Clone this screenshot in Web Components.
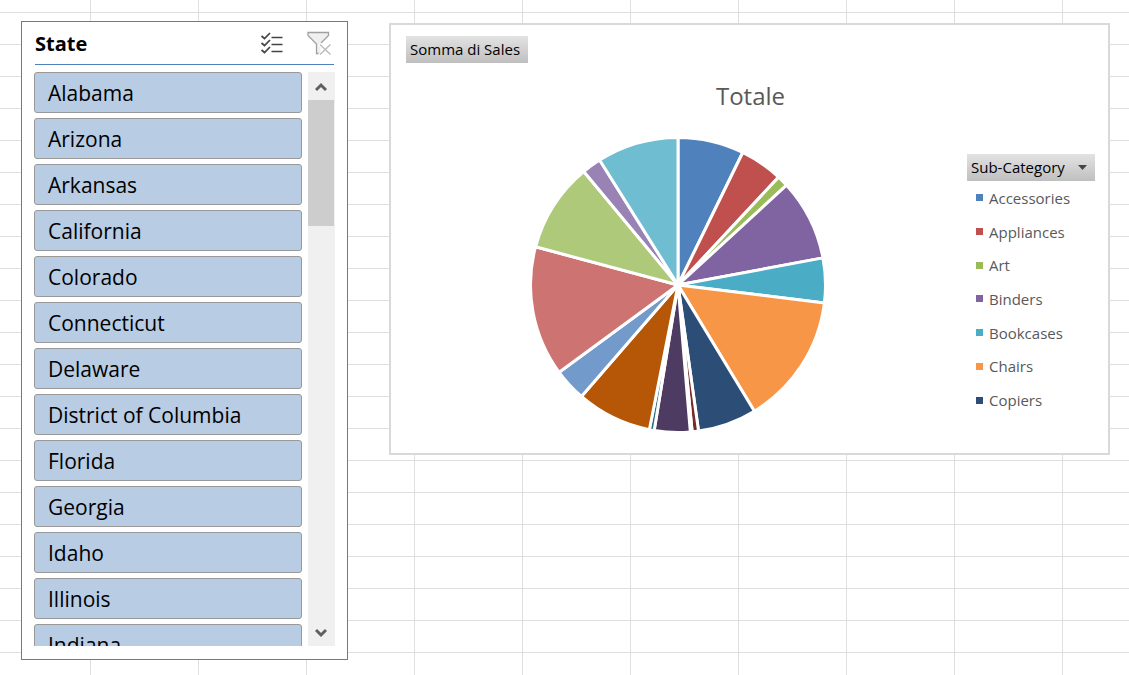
<!DOCTYPE html>
<html lang="it">
<head>
<meta charset="utf-8">
<meta name="viewport" content="width=device-width, initial-scale=1">
<title>Sales</title>
<style>
  body { margin: 0; font-family: "Open Sans", "Noto Sans", sans-serif; }
</style>
</head>
<body>
<sheet-canvas>
  <state-slicer heading="State">
    <slicer-item>Alabama</slicer-item>
    <slicer-item>Arizona</slicer-item>
    <slicer-item>Arkansas</slicer-item>
    <slicer-item>California</slicer-item>
    <slicer-item>Colorado</slicer-item>
    <slicer-item>Connecticut</slicer-item>
    <slicer-item>Delaware</slicer-item>
    <slicer-item>District of Columbia</slicer-item>
    <slicer-item>Florida</slicer-item>
    <slicer-item>Georgia</slicer-item>
    <slicer-item>Idaho</slicer-item>
    <slicer-item>Illinois</slicer-item>
    <slicer-item>Indiana</slicer-item>
  </state-slicer>
  <pivot-chart heading="Totale">
    <field-button slot="value">Somma di Sales</field-button>
    <pie-plot slot="plot"></pie-plot>
    <field-button slot="legend" menu>Sub-Category</field-button>
    <chart-legend slot="legend">
      <legend-entry color="#4f81bd">Accessories</legend-entry>
      <legend-entry color="#c0504d">Appliances</legend-entry>
      <legend-entry color="#9bbb59">Art</legend-entry>
      <legend-entry color="#8064a2">Binders</legend-entry>
      <legend-entry color="#4bacc6">Bookcases</legend-entry>
      <legend-entry color="#f79646">Chairs</legend-entry>
      <legend-entry color="#2c4d75">Copiers</legend-entry>
    </chart-legend>
  </pivot-chart>
</sheet-canvas>

<script>
const define = (name, render) => customElements.define(name, class extends HTMLElement {
  connectedCallback() {
    if (this.shadowRoot) return;
    this.attachShadow({ mode: "open" }).innerHTML = render(this);
  }
});

// Worksheet background with cell gridlines
define("sheet-canvas", () => `
  <style>
    :host {
      display: flex; align-items: stretch; gap: 41px; box-sizing: border-box;
      height: 100vh; min-height: 480px; padding: 21px 19px 15px 21px;
      background-color: #fff;
      background-image:
        linear-gradient(to right, #dfdfdf 1px, transparent 1px),
        linear-gradient(to bottom, #dfdfdf 1px, transparent 1px);
      background-size: 108px 100%, 100% 32px;
      background-position: 90px 0, 0 12px;
    }
  </style>
  <slot></slot>`);

define("state-slicer", el => `
  <style>
    :host {
      display: flex; flex-direction: column; flex: 0 0 327px; box-sizing: border-box;
      background: #fff; border: 1px solid #4f81bd; padding: 0 12px 13px;
    }
    header {
      display: flex; align-items: center; gap: 22px; height: 42px; margin: 0 1px; padding-right: 2px;
      box-sizing: content-box; border-bottom: 1px solid #4f81bd;
    }
    h2 { flex: 1; margin: 0; padding-top: 2px; font-size: 20px; line-height: 28px; font-weight: 700; color: #000; }
    button { display: block; border: 0; padding: 0; background: none; }
    header button { height: 24px; }
    svg { display: block; }
    .body { display: flex; flex: 1; min-height: 0; gap: 6px; margin-top: 7px; }
    .list { flex: 1; display: flex; flex-direction: column; gap: 5px; overflow: hidden; }
    .bar { display: flex; flex-direction: column; width: 27px; background: #f0f0f0; }
    .bar button { display: grid; place-items: center; box-sizing: border-box; width: 26px; height: 28px; padding-top: 2px; }
    .track { flex: 1; }
    .thumb { width: 26px; height: 126px; background: #cdcdcd; }
  </style>
  <header>
    <h2>${el.getAttribute("heading")}</h2>
    <button aria-label="Multi-select"><svg width="24" height="24" viewBox="0 0 24 24" fill="none" stroke="#444">
      <path d="M1.500 5l3 2.500L10 2M1.500 12l3 2.500L10 9M1.500 19l3 2.500L10 16" stroke-width="1.700"/>
      <path d="M11.500 6.500h11M11.500 13.500h11M11.500 20.500h11" stroke-width="1.300"/></svg></button>
    <button aria-label="Clear filter"><svg width="26" height="24" viewBox="0 0 26 24" fill="none">
      <path d="M2 1.500h20.500v3l-8 8V22.500h-3.500V13L2 4.500z" fill="#f0f0f0"/>
      <path d="M14 22.500h-3.500V13L2 4.500V1.500h20.500v3L15 12" stroke="#a0a0a0" stroke-width="1.300"/>
      <path d="M13.500 13l11 11M24.500 13l-11 11" stroke="#fff" stroke-width="3.500"/>
      <path d="M14 13.500l10.500 10M24.500 13.500L14 23.500" stroke="#bbb" stroke-width="1.400"/></svg></button>
  </header>
  <div class="body">
    <div class="list"><slot></slot></div>
    <div class="bar">
      <button aria-label="Scroll up"><svg width="12" height="10" viewBox="0 0 12 10"><path d="M1 8l5-5 5 5" fill="none" stroke="#606060" stroke-width="3"/></svg></button>
      <div class="track"><div class="thumb"></div></div>
      <button aria-label="Scroll down"><svg width="12" height="10" viewBox="0 0 12 10"><path d="M1 2l5 5 5-5" fill="none" stroke="#606060" stroke-width="3"/></svg></button>
    </div>
  </div>`);

define("slicer-item", () => `
  <style>
    :host { display: block; flex: none; }
    button {
      display: block; box-sizing: border-box; width: 100%; height: 41px; padding: 1px 13px 0;
      border: 1px solid #999; border-radius: 3px; background: #b8cce4; color: #000;
      font: inherit; font-size: 21px; line-height: 38px; text-align: left;
    }
  </style>
  <button aria-pressed="true"><slot></slot></button>`);

define("pivot-chart", el => `
  <style>
    :host {
      display: flex; flex-direction: column; flex: 1; align-self: flex-start; min-width: 0;
      box-sizing: border-box; margin-top: 2px; padding: 11px 13px 19px 15px;
      background: #fff; border: 2px solid #d9d9d9;
    }
    .value { display: flex; }
    h1 {
      margin: 15px 0 0; text-align: center; font-size: 24px; line-height: 36px;
      font-weight: 400; color: #595959;
    }
    .area { display: flex; gap: 18px; margin-top: 22px; }
    .plot { flex: 1; min-width: 0; }
    aside { flex: 0 0 128px; margin-top: 18px; }
  </style>
  <div class="value"><slot name="value"></slot></div>
  <h1>${el.getAttribute("heading")}</h1>
  <div class="area">
    <div class="plot"><slot name="plot"></slot></div>
    <aside><slot name="legend"></slot></aside>
  </div>`);

define("field-button", el => `
  <style>
    :host { display: block; }
    button {
      display: flex; align-items: center; justify-content: space-between; gap: 8px;
      width: 100%; height: 27px; border: 0; padding: 0 8px 0 4px;
      background: linear-gradient(#e3e3e3, #bfbfbf); color: #000;
      font: inherit; font-size: 15px; line-height: 27px; white-space: nowrap;
    }
    svg { flex: none; }
  </style>
  <button><slot></slot>${el.hasAttribute("menu")
    ? `<svg width="9" height="5" viewBox="0 0 9 5"><path d="M0 0h9L4.500 5z" fill="#444"/></svg>` : ""}</button>`);

define("chart-legend", () => `
  <style>
    :host { display: grid; grid-auto-rows: 1fr; height: 236px; }
  </style>
  <slot></slot>`);

define("legend-entry", el => `
  <style>
    :host { display: flex; align-items: center; gap: 6px; padding-left: 9px;
      font-size: 15px; line-height: 20px; color: #595959; }
    i { width: 7px; height: 7px; background: ${el.getAttribute("color")}; }
  </style>
  <i></i><span><slot></slot></span>`);

// Each slice: [end angle in degrees clockwise from the top, colour]
define("pie-plot", () => {
  const slices = [
    [26.05, "#4f81bd"], [43, "#c0504d"], [47.4, "#9bbb59"], [79.4, "#8064a2"],
    [97, "#4bacc6"], [148.8, "#f79646"], [172, "#2c4d75"], [174.500, "#772c2a"],
    [175.2, "#5f7530"], [189.3, "#4d3b62"], [191.2, "#276a7c"], [220.9, "#b65708"],
    [233.7, "#729aca"], [285, "#cd7371"], [320.3, "#afc97a"], [327.9, "#9983b5"],
    [360, "#6fbdd1"]
  ];
  const r = 147.500;
  const point = deg => {
    const a = deg * Math.PI / 180;
    return (r * Math.sin(a)).toFixed(2) + " " + (-r * Math.cos(a)).toFixed(2);
  };
  let start = 0;
  const paths = slices.map(([end, fill]) => {
    const d = `M0 0L${point(start)}A${r} ${r} 0 0 1 ${point(end)}Z`;
    start = end;
    return `<path d="${d}" fill="${fill}"/>`;
  }).join("");
  return `
  <style>
    :host { display: flex; justify-content: center; }
    svg { display: block; width: 298px; max-width: 100%; height: auto; }
  </style>
  <svg viewBox="-149 -149 298 298" role="img" aria-label="Totale" stroke="#fff" stroke-width="3" stroke-linejoin="round">${paths}</svg>`;
});
</script>
</body>
</html>
